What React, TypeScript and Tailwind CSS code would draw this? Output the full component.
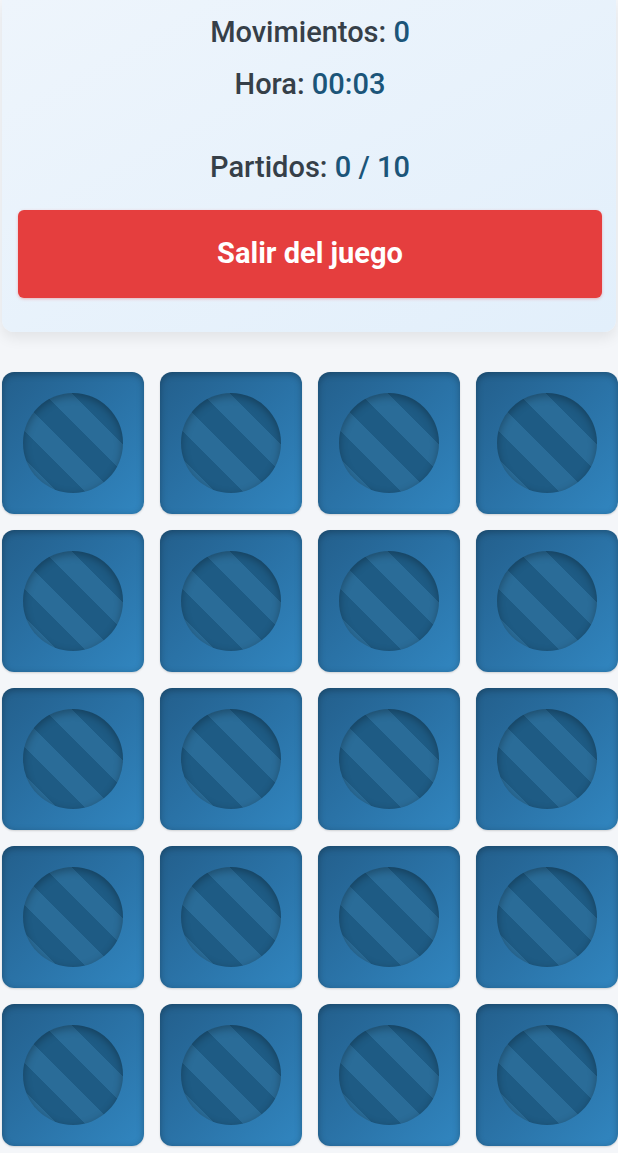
import React from 'react';

const CARDS = Array.from({ length: 20 }, (_, i) => i);

function CardBack() {
  return (
    <div className="aspect-square rounded-xl bg-gradient-to-br from-[#235f8c] via-[#2a72a6] to-[#3186c0] shadow-[inset_0_2px_7px_rgba(0,0,0,0.28),0_1px_2px_rgba(0,0,0,0.15)] flex items-center justify-center">
      <div className="w-[100px] h-[100px] rounded-full bg-[repeating-linear-gradient(45deg,#1e5b84_0px,#1e5b84_5px,#2a6c98_5px,#2a6c98_25px,#1e5b84_25px,#1e5b84_40px)] shadow-[inset_0_3px_8px_rgba(0,0,0,0.3)]" />
    </div>
  );
}

export default function App() {
  return (
    <div className="min-h-screen bg-[#f4f6f9] font-['Roboto',sans-serif]">
      <div className="mx-[2px] rounded-b-xl bg-gradient-to-br from-[#eef5fc] to-[#e2effb] shadow-[0_6px_14px_rgba(0,0,0,0.08)] pl-4 pr-[14px] pt-[14px] pb-[34px] text-center">
        <p className="text-[29px] leading-[36px] font-medium text-[#363f48]">
          Movimientos: <span className="text-[#1b5579]">0</span>
        </p>
        <p className="mt-4 text-[29px] leading-[36px] font-medium text-[#363f48]">
          Hora: <span className="text-[#1b5579]">00:03</span>
        </p>
        <p className="mt-[47px] text-[29px] leading-[36px] font-medium text-[#363f48]">
          Partidos: <span className="text-[#1b5579]">0 / 10</span>
        </p>
        <button className="mt-[25px] w-full h-[88px] rounded-md bg-[#e53e3e] text-white text-[29px] font-bold shadow-[0_1px_3px_rgba(229,62,62,0.35)]">
          Salir del juego
        </button>
      </div>

      <div className="ml-[2px] mt-10 w-[616px] grid grid-cols-4 gap-4 pb-4">
        {CARDS.map((c) => (
          <CardBack key={c} />
        ))}
      </div>
    </div>
  );
}
